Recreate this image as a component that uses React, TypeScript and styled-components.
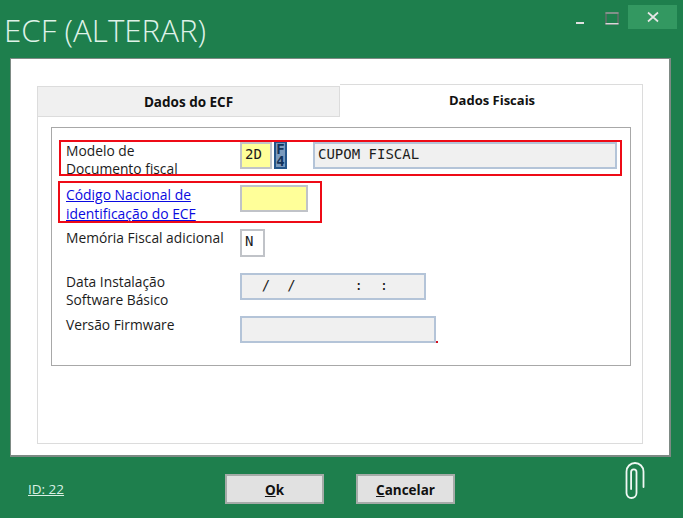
import React from "react";
import styled, { createGlobalStyle } from "styled-components";

const Global = createGlobalStyle`
  html, body { margin: 0; padding: 0; background: #1e7f4d; }
  * { box-sizing: border-box; }
`;
const sans = `"Open Sans", "Noto Sans", "Liberation Sans", sans-serif`;
const mono = `"DejaVu Sans Mono", "Liberation Mono", monospace`;

const Win = styled.div`
  width: 683px; height: 518px; background: #1e7f4d; display: flex; flex-direction: column; overflow: hidden;
  font-family: ${sans};
`;
const Header = styled.header`
  height: 58px; flex: none; display: flex; justify-content: space-between; align-items: flex-start;
`;
const Title = styled.h1`
  margin: 9px 0 0 4px; font-size: 31.3px; line-height: 42px; font-weight: 300; color: #dff2e8; white-space: nowrap;
`;
const Controls = styled.div`
  display: flex; align-items: flex-start; margin: 5px 6px 0 0;
`;
const Ctl = styled.div<{ $w: number; $hot?: boolean }>`
  width: ${p => p.$w}px; height: 24px; display: flex; align-items: center; justify-content: center;
  background: ${p => (p.$hot ? "#339861" : "transparent")};
`;
const Panel = styled.main`
  flex: none; height: 399px; margin: 0 12px 0 10px; background: #fff; border: 1px solid #7d8a84; border-right-width: 2px; border-bottom-width: 2px;
  padding: 25px 26px 11px 26px; display: flex; flex-direction: column;
`;
const Tabs = styled.div`
  display: flex; height: 33px; flex: none; align-items: flex-end;
`;
const Tab = styled.div<{ $active?: boolean }>`
  width: 303px; height: ${p => (p.$active ? 33 : 31)}px;
  display: flex; align-items: center; justify-content: center;
  font-size: ${p => (p.$active ? 13 : 13.5)}px; font-weight: 700; color: #111;
  padding-bottom: ${p => (p.$active ? 3 : 0)}px;
  padding-left: ${p => (p.$active ? 2 : 0)}px;
  background: ${p => (p.$active ? "#fff" : "#f0f0f0")};
  border: 1px solid #dcdcdc;
  border-bottom: ${p => (p.$active ? "none" : "1px solid #dcdcdc")};
  border-left: ${p => (p.$active ? "none" : "1px solid #dcdcdc")};
`;
const TabBody = styled.section`
  flex: 1; border: 1px solid #dcdcdc; border-top: none; padding: 10px 11px 0 13px; background: #fff;
`;
const Group = styled.div`
  position: relative; height: 239px; border: 1px solid #a8a8a8; padding: 14px 0 0 14px;
`;
const Row = styled.div<{ $top: number; $h: number }>`
  display: grid; grid-template-columns: 174px 1fr; height: ${p => p.$h}px; margin-top: ${p => p.$top}px;
`;
const Label = styled.div`
  font-size: 13.8px; line-height: 18px; color: #1c1c1c; white-space: nowrap;
`;
const LinkLabel = styled.a`
  display: block; font-size: 13.9px; line-height: 19px; color: #0a0ae0; text-decoration: underline; white-space: nowrap;
`;
const Fields = styled.div`
  display: flex; align-items: flex-start;
`;
const Field = styled.div<{ $w: number; $h?: number; $bg?: string; $edge?: string; $gap?: number }>`
  width: ${p => p.$w}px; height: ${p => p.$h ?? 27}px; margin-right: ${p => p.$gap ?? 0}px;
  background: ${p => p.$bg ?? "#fff"}; border: 2px solid ${p => p.$edge ?? "#c0c3c8"};
  font-family: ${mono}; font-size: 14px; line-height: 21px; color: #1c1c1c; padding-left: 3px; white-space: pre;
`;
const F4 = styled.button`
  width: 13px; height: 28px; margin: -1px 26px 0 0; padding: 0; border: 2px solid #24558a; background: #7a9abd; color: #12335a;
  font-family: ${mono}; font-weight: 700; font-size: 14px; line-height: 12px; white-space: pre-line; text-align: center;
`;
const Highlight = styled.div<{ $x: number; $y: number; $w: number; $h: number }>`
  position: absolute; left: ${p => p.$x}px; top: ${p => p.$y}px; width: ${p => p.$w}px; height: ${p => p.$h}px;
  border: 2px solid #ee0b16; pointer-events: none;
`;
const Speck = styled.i`
  position: absolute; left: 384px; top: 213px; width: 2px; height: 2px; background: #d01020;
`;
const Footer = styled.footer`
  flex: 1; position: relative; display: grid; grid-template-columns: 225px 99px 32px 99px 1fr; padding-top: 17px; align-items: start;
`;
const IdLink = styled.a`
  font-size: 13.5px; line-height: 18px; margin: 6px 0 0 28px; color: #d9efe4; text-decoration: underline; justify-self: start;
`;
const Btn = styled.button`
  height: 30px; background: #e1e1e1; border: 2px solid #a5aba8; padding: 1px 0 0; font-family: ${sans}; font-size: 13.5px; font-weight: 700; color: #111;
  u { text-decoration: underline; }
`;
const Clip = styled.svg`
  justify-self: end; margin: -12px 38px 0 0;
`;

export default function App() {
  return (
    <Win>
      <Global />
      <Header>
        <Title>ECF (ALTERAR)</Title>
        <Controls>
          <Ctl $w={30}><svg width="10" height="24" viewBox="0 0 10 24"><path d="M1 18h8" stroke="#e0e0e0" strokeWidth="2" /></svg></Ctl>
          <Ctl $w={33}><svg width="14" height="24" viewBox="0 0 14 24"><path d="M1 8h12v11H1z" fill="none" stroke="#5f6f68" strokeWidth="1.6" /><path d="M0.5 18.7h13" stroke="#d8d8d8" strokeWidth="1.4" /><path d="M0.5 8h13" stroke="#8f9a95" strokeWidth="1.6" /></svg></Ctl>
          <Ctl $w={49} $hot><svg width="12" height="12" viewBox="0 0 12 12"><path d="M1 1.5l10 9M11 1.5l-10 9" stroke="#e6e6e6" strokeWidth="1.7" /></svg></Ctl>
        </Controls>
      </Header>
      <Panel>
        <Tabs>
          <Tab>Dados do ECF</Tab>
          <Tab $active>Dados Fiscais</Tab>
        </Tabs>
        <TabBody>
          <Group>
            <Row $top={0} $h={28}>
              <Label>Modelo de<br />Documento fiscal</Label>
              <Fields>
                <Field $w={32} $bg="#ffff99" $gap={2}>2D</Field>
                <F4>{"F\n4"}</F4>
                <Field $w={304} $h={27} $bg="#f0f0f0" $edge="#b4c4d8">CUPOM FISCAL</Field>
              </Fields>
            </Row>
            <Row $top={15} $h={27}>
              <LinkLabel href="#">Código Nacional de<br />identificação do ECF</LinkLabel>
              <Fields><Field $w={68} $bg="#ffff99" /></Fields>
            </Row>
            <Row $top={17} $h={28}>
              <Label>Memória Fiscal adicional</Label>
              <Fields><Field $w={25} $h={28}>N</Field></Fields>
            </Row>
            <Row $top={16} $h={27}>
              <Label>Data Instalação<br />Software Básico</Label>
              <Fields><Field $w={186} $bg="#f0f0f0" $edge="#b4c4d8">{"  /  /       :  :"}</Field></Fields>
            </Row>
            <Row $top={16} $h={27}>
              <Label>Versão Firmware</Label>
              <Fields><Field $w={196} $bg="#f0f0f0" $edge="#b4c4d8" /></Fields>
            </Row>
            <Highlight $x={7} $y={12} $w={563} $h={36} />
            <Highlight $x={6} $y={53} $w={264} $h={42} />
            <Speck />
          </Group>
        </TabBody>
      </Panel>
      <Footer>
        <IdLink href="#">ID: 22</IdLink>
        <Btn><u>O</u>k</Btn>
        <span />
        <Btn><u>C</u>ancelar</Btn>
        <Clip width="20" height="38" viewBox="0 0 20 38" fill="none" stroke="#f0f8f4" strokeWidth="1.8" strokeLinecap="round">
          <path d="M18.5 25V9.5a8.5 8.5 0 0 0-17 0V31a5 5 0 0 0 10 0V10a2.7 2.7 0 0 0-5.4 0v17" />
        </Clip>
      </Footer>
    </Win>
  );
}
